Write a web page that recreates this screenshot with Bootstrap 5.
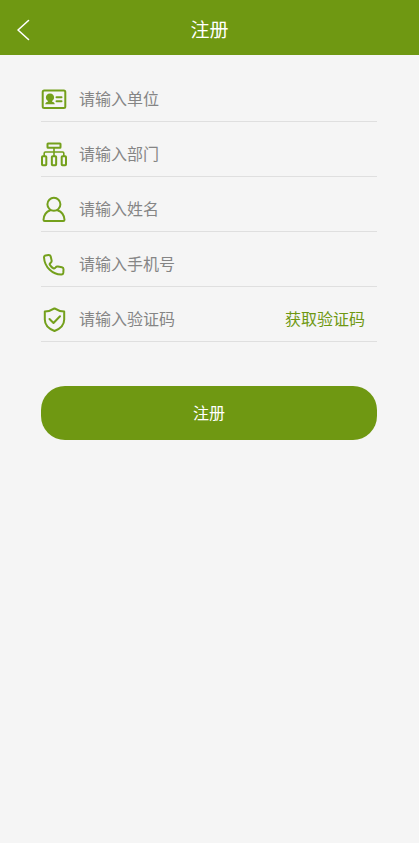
<!DOCTYPE html>
<html lang="zh-CN">
<head>
<meta charset="utf-8">
<meta name="viewport" content="width=device-width, initial-scale=1">
<title>注册</title>
<link rel="stylesheet" href="https://cdn.jsdelivr.net/npm/bootstrap@5.3.0/dist/css/bootstrap.min.css">
<style>
:root { --leaf: #6f9812; }
body { background: #f5f5f5; font-family: "Noto Sans CJK SC", sans-serif; font-size: 16px; line-height: 24px; }
.top-bar { background: var(--leaf); color: #fff; height: 55px; padding-top: 4px; }
.top-bar h1 { font-size: 19px; line-height: 28px; font-weight: 400; padding-bottom: 2px; }
.side { width: 46px; height: 48px; }
.signup { padding: 12px 42px 0 41px; }
.field-row { height: 55px; padding-top: 10px; gap: 12px; border-bottom: 1px solid #dfdfdf; }
.field-row svg { width: 26px; height: 26px; }
.field-row svg, .top-bar svg { fill: none; stroke: currentColor; stroke-width: 2; stroke-linejoin: round; stroke-linecap: round; }
.field-row label { color: #74a01c; }
.field-row .form-control { color: #333; font-size: 16px; line-height: 24px; min-width: 0; padding: 0 0 2px; }
.field-row .form-control::placeholder { color: #858585; }
.code-btn { color: var(--leaf); font-size: 16px; line-height: 24px; margin-right: 12px; padding: 0 0 2px; }
.submit-btn { --bs-btn-bg: var(--leaf); --bs-btn-color: #fff; --bs-btn-hover-bg: #62870f; --bs-btn-hover-color: #fff; --bs-btn-active-bg: #56770d; --bs-btn-active-color: #fff; --bs-btn-border-width: 0; font-size: 16px; height: 54px; margin-top: 44px; padding: 0 0 2px; border-radius: 24px; }
</style>
<script defer src="https://cdn.jsdelivr.net/npm/bootstrap@5.3.0/dist/js/bootstrap.bundle.min.js"></script>
</head>
<body>
<header class="top-bar d-flex align-items-center justify-content-between">
  <a href="#" class="side d-flex align-items-center justify-content-center text-white" aria-label="返回">
    <svg width="14" height="22" viewBox="0 0 14 22"><path d="M12.500 1.500 2 11l10.500 9.500" stroke-width="1.600"/></svg>
  </a>
  <h1 class="mb-0">注册</h1>
  <span class="side"></span>
</header>
<main>
  <form class="signup">
    <div class="field-row d-flex align-items-center">
      <label for="unit" class="d-flex" aria-label="单位">
        <svg viewBox="0 0 26 26"><rect x="1.700" y="4.500" width="22.600" height="17.600" rx="1.500"/><path d="M15.500 11.300h5M15.500 15.300h5"/><path d="M9 7.500c2.600 0 4.100 1.700 4.100 4 0 1.500-.8 2.800-2 3.500v.8c1.400.3 2.600.8 2.600 2.400H4.300c0-1.600 1.200-2.100 2.600-2.400V15c-1.200-.7-2-2-2-3.500 0-2.300 1.500-4 4.100-4Z" fill="currentColor" stroke="none"/></svg>
      </label>
      <input id="unit" type="text" class="form-control border-0 bg-transparent shadow-none" placeholder="请输入单位">
    </div>
    <div class="field-row d-flex align-items-center">
      <label for="dept" class="d-flex" aria-label="部门">
        <svg viewBox="0 0 26 26"><rect x="6.500" y="2.500" width="13" height="4.300" rx=".5"/><path d="M13 7v8M3.200 15v-2.800q0-1.200 1.200-1.200h17.200q1.200 0 1.200 1.200V15" stroke-width="1.600"/><rect x="1" y="15.300" width="4.300" height="9" rx=".8"/><rect x="10.850" y="15.300" width="4.300" height="9" rx=".8"/><rect x="20.700" y="15.300" width="4.300" height="9" rx=".8"/></svg>
      </label>
      <input id="dept" type="text" class="form-control border-0 bg-transparent shadow-none" placeholder="请输入部门">
    </div>
    <div class="field-row d-flex align-items-center">
      <label for="name" class="d-flex" aria-label="姓名">
        <svg viewBox="0 0 26 26"><circle cx="12.900" cy="8.300" r="6.500"/><path d="M9.300 14.200C5.500 15.500 2.800 19 2.500 23.800q0 1.200 1.200 1.200h18.600q1.200 0 1.200-1.200C23.200 19 20.300 15.500 16.500 14.200"/></svg>
      </label>
      <input id="name" type="text" class="form-control border-0 bg-transparent shadow-none" placeholder="请输入姓名">
    </div>
    <div class="field-row d-flex align-items-center">
      <label for="phone" class="d-flex" aria-label="手机号">
        <svg viewBox="0 0 26 26"><path d="M4.500 4.400 7.600 4q1.700-.1 2.100 1.500l.9 3.900q.3 1.300-.7 2.200l-.9.800q-.6.600-.2 1.300 1.300 2.300 3.700 3.700.8.400 1.400-.3l.7-.8q.9-1.100 2.300-.8l4 .8q1.600.4 1.600 2l-.2 3.600q-.2 1.700-1.900 1.700C12 23.800 3.500 16.500 3 6.300q-.1-1.600 1.500-1.900Z"/></svg>
      </label>
      <input id="phone" type="tel" class="form-control border-0 bg-transparent shadow-none" placeholder="请输入手机号">
    </div>
    <div class="field-row d-flex align-items-center">
      <label for="code" class="d-flex" aria-label="验证码">
        <svg viewBox="0 0 26 26"><path d="M13.500 2.400c2.700 1.900 6 2.900 9.700 3v8.100c0 5.500-4 9.300-9.700 11.500C7.800 22.800 3.800 19 3.800 13.500V5.400c3.700-.1 7-1.100 9.700-3Z"/><path d="m8.500 13 4 4 6.500-6.700"/></svg>
      </label>
      <input id="code" type="text" inputmode="numeric" class="form-control border-0 bg-transparent shadow-none" placeholder="请输入验证码">
      <button type="button" class="code-btn btn border-0 text-nowrap">获取验证码</button>
    </div>
    <button type="submit" class="submit-btn btn w-100">注册</button>
  </form>
</main>
</body>
</html>
